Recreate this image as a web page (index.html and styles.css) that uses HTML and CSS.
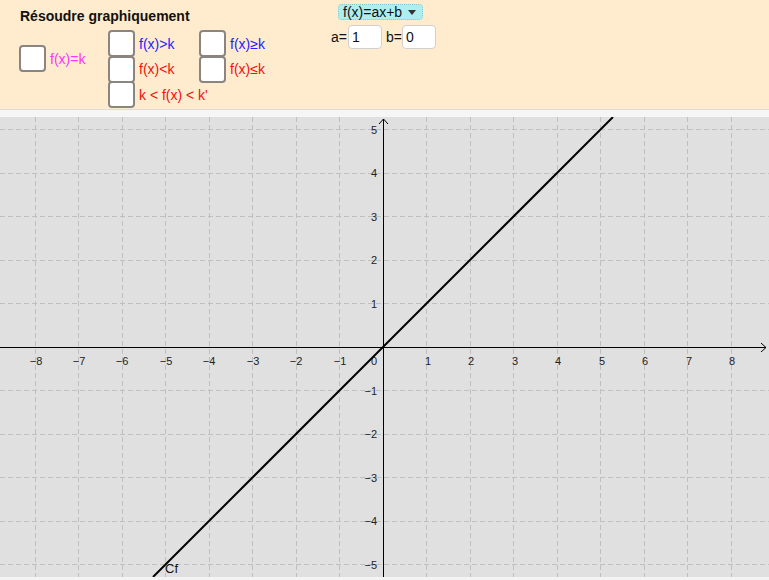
FILE: index.html
```html
<!DOCTYPE html>
<html lang="fr">
<head>
<meta charset="utf-8">
<title>Résoudre graphiquement</title>
<link rel="stylesheet" href="styles.css">
</head>
<body>
<div class="app">
  <div class="panel">
    <div class="left">
      <div class="title">Résoudre graphiquement</div>
      <div class="checks">
        <div class="group g1">
          <div class="row"><span class="box"></span><span class="lbl magenta">f(x)=k</span></div>
        </div>
        <div class="group g2">
          <div class="row"><span class="box"></span><span class="lbl blue">f(x)&gt;k</span></div>
          <div class="row"><span class="box"></span><span class="lbl red">f(x)&lt;k</span></div>
          <div class="row"><span class="box"></span><span class="lbl red">k &lt; f(x) &lt; k'</span></div>
        </div>
        <div class="group g3">
          <div class="row"><span class="box"></span><span class="lbl blue">f(x)≥k</span></div>
          <div class="row"><span class="box"></span><span class="lbl red">f(x)≤k</span></div>
        </div>
      </div>
    </div>
    <div class="right">
      <div class="dropdown">f(x)=ax+b <span class="caret"></span></div>
      <div class="inputs">
        <span class="eq">a=</span><span class="field">1</span>
        <span class="eq eqb">b=</span><span class="field">0</span>
      </div>
    </div>
  </div>
  <div class="strip"></div>
  <div class="graph">
    <svg width="769" height="460" viewBox="0 0 769 460">
      <g class="grid">
        <line x1="35.5" y1="0" x2="35.5" y2="460"/>
        <line x1="78.5" y1="0" x2="78.5" y2="460"/>
        <line x1="122.5" y1="0" x2="122.5" y2="460"/>
        <line x1="165.5" y1="0" x2="165.5" y2="460"/>
        <line x1="209.5" y1="0" x2="209.5" y2="460"/>
        <line x1="252.5" y1="0" x2="252.5" y2="460"/>
        <line x1="296.5" y1="0" x2="296.5" y2="460"/>
        <line x1="339.5" y1="0" x2="339.5" y2="460"/>
        <line x1="426.5" y1="0" x2="426.5" y2="460"/>
        <line x1="470.5" y1="0" x2="470.5" y2="460"/>
        <line x1="513.5" y1="0" x2="513.5" y2="460"/>
        <line x1="557.5" y1="0" x2="557.5" y2="460"/>
        <line x1="600.5" y1="0" x2="600.5" y2="460"/>
        <line x1="644.5" y1="0" x2="644.5" y2="460"/>
        <line x1="687.5" y1="0" x2="687.5" y2="460"/>
        <line x1="731.5" y1="0" x2="731.5" y2="460"/>
        <line x1="0" y1="12.5" x2="769" y2="12.5"/>
        <line x1="0" y1="56.5" x2="769" y2="56.5"/>
        <line x1="0" y1="99.5" x2="769" y2="99.5"/>
        <line x1="0" y1="143.5" x2="769" y2="143.5"/>
        <line x1="0" y1="186.5" x2="769" y2="186.5"/>
        <line x1="0" y1="273.5" x2="769" y2="273.5"/>
        <line x1="0" y1="317.5" x2="769" y2="317.5"/>
        <line x1="0" y1="360.5" x2="769" y2="360.5"/>
        <line x1="0" y1="404.5" x2="769" y2="404.5"/>
        <line x1="0" y1="447.5" x2="769" y2="447.5"/>
      </g>
      <g class="axis">
        <line x1="0" y1="230.5" x2="766" y2="230.5"/>
        <line x1="383.5" y1="460" x2="383.5" y2="2"/>
        <polyline points="761,226 766,230.5 761,235"/>
        <polyline points="379,7 383.5,2 388,7"/>
      </g>
      <g class="xl">
        <text x="36" y="248">−8</text>
        <text x="79" y="248">−7</text>
        <text x="122" y="248">−6</text>
        <text x="166" y="248">−5</text>
        <text x="209" y="248">−4</text>
        <text x="253" y="248">−3</text>
        <text x="296" y="248">−2</text>
        <text x="340" y="248">−1</text>
        <text x="428" y="248">1</text>
        <text x="471" y="248">2</text>
        <text x="515" y="248">3</text>
        <text x="558" y="248">4</text>
        <text x="602" y="248">5</text>
        <text x="645" y="248">6</text>
        <text x="689" y="248">7</text>
        <text x="732" y="248">8</text>
      </g>
      <g class="yl">
        <text x="377" y="248">0</text>
        <text x="377" y="16.5">5</text>
        <text x="377" y="60">4</text>
        <text x="377" y="103.5">3</text>
        <text x="377" y="147">2</text>
        <text x="377" y="190.5">1</text>
        <text x="377" y="277.5">−1</text>
        <text x="377" y="321">−2</text>
        <text x="377" y="364.5">−3</text>
        <text x="377" y="408">−4</text>
        <text x="377" y="451.5">−5</text>
      </g>
      <line class="curve" x1="153" y1="460" x2="613" y2="0"/>
      <text class="cf" x="165" y="456">Cf</text>
    </svg>
  </div>
  <div class="bottom"></div>
</div>
</body>
</html>
```

FILE: styles.css
```css
html, body {
  margin: 0;
  padding: 0;
}
body {
  width: 769px;
  height: 580px;
  overflow: hidden;
  font-family: "Liberation Sans", Arial, sans-serif;
  background: #f4f4f4;
}
.app {
  display: flex;
  flex-direction: column;
  width: 769px;
  height: 580px;
}
.panel {
  height: 110px;
  background: #ffebcd;
  border-bottom: 1px solid #dcdcdc;
  display: flex;
  padding-left: 19px;
  box-sizing: border-box;
  flex: none;
}
.left {
  width: 312px;
  padding-top: 7px;
}
.title {
  font-size: 14px;
  font-weight: bold;
  line-height: 18px;
  color: #111;
  padding-left: 1px;
}
.checks {
  display: flex;
  margin-top: 6px;
}
.group {
  display: flex;
  flex-direction: column;
}
.g1 {
  width: 89px;
  margin-top: 15px;
}
.g2 {
  width: 91px;
}
.row {
  display: flex;
  align-items: center;
  height: 25.5px;
}
.box {
  width: 27px;
  height: 27px;
  box-sizing: border-box;
  background: #fff;
  border: 2px solid #8a8580;
  border-radius: 4px;
  flex: none;
}
.lbl {
  font-size: 14px;
  margin-left: 4px;
  white-space: nowrap;
}
.magenta { color: #ff33ff; }
.blue { color: #2222ff; }
.red { color: #ee1111; }
.right {
  padding-top: 4px;
  display: flex;
  flex-direction: column;
  align-items: flex-start;
}
.dropdown {
  margin-left: 7px;
  height: 16px;
  box-sizing: border-box;
  padding: 0 6px 0 4px;
  background: #afeeee;
  border: 1px dotted #8fc8c8;
  border-radius: 4px;
  font-size: 14px;
  line-height: 14px;
  color: #111;
  display: flex;
  align-items: center;
  gap: 4px;
}
.caret {
  width: 0;
  height: 0;
  border-left: 4px solid transparent;
  border-right: 4px solid transparent;
  border-top: 5px solid #333;
  margin-left: 2px;
}
.inputs {
  display: flex;
  align-items: center;
  margin-top: 5px;
  font-size: 14px;
  color: #111;
}
.eq {
  width: 17px;
}
.eqb {
  margin-left: 4px;
  width: 16px;
}
.field {
  width: 34px;
  height: 24px;
  box-sizing: border-box;
  background: #fff;
  border: 1px solid #d0d0d0;
  border-radius: 4px;
  padding-left: 3px;
  line-height: 22px;
}
.strip {
  height: 7px;
  background: #f6f6f6;
  flex: none;
}
.graph {
  height: 460px;
  background: #e0e0e0;
  flex: none;
}
.graph svg {
  display: block;
}
.grid line {
  stroke: #c0c0c0;
  stroke-width: 1;
  stroke-dasharray: 5 3;
}
.axis line, .axis polyline {
  stroke: #000;
  stroke-width: 1;
  fill: none;
}
.xl text {
  font-family: "Liberation Sans", Arial, sans-serif;
  font-size: 11px;
  fill: #222;
  text-anchor: middle;
}
.yl text {
  font-family: "Liberation Sans", Arial, sans-serif;
  font-size: 11px;
  fill: #222;
  text-anchor: end;
}
.curve {
  stroke: #000;
  stroke-width: 2;
}
.cf {
  font-family: "Liberation Sans", Arial, sans-serif;
  font-size: 13px;
  fill: #111;
}
.bottom {
  flex: 1;
  background: #f4f4f4;
}
```
